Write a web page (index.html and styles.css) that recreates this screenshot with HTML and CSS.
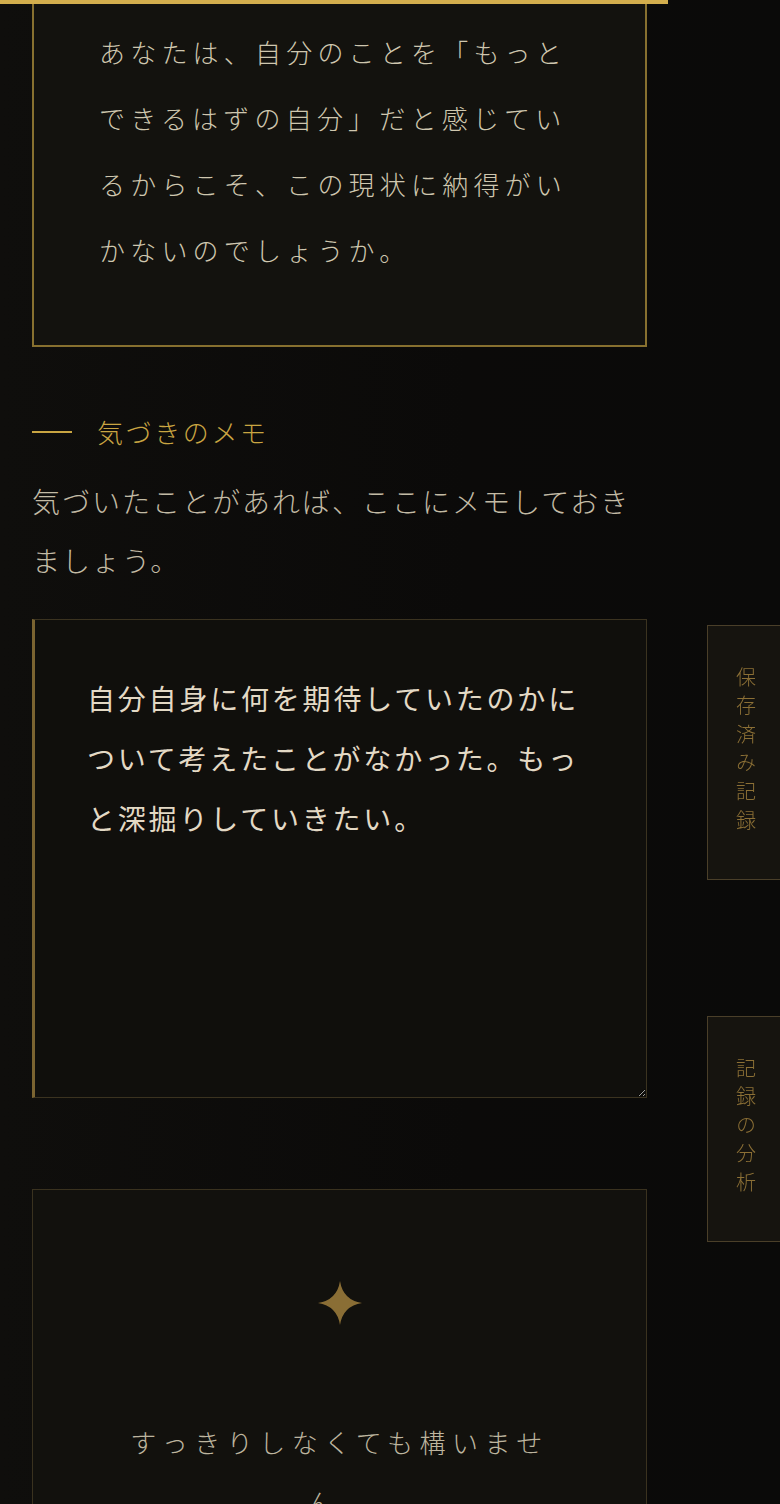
FILE: index.html
```html
<!DOCTYPE html>
<html lang="ja">
<head>
<meta charset="utf-8">
<title>気づきのメモ</title>
<link rel="stylesheet" href="styles.css">
</head>
<body>
<div class="progress"><div class="progress-fill" style="width:85.6%"></div></div>

<main class="page">
  <section class="question-card">
    <p class="question-text">あなたは、自分のことを「もっとできるはずの自分」だと感じているからこそ、この現状に納得がいかないのでしょうか。</p>
  </section>

  <section class="memo">
    <h2 class="memo-title"><span class="memo-line"></span>気づきのメモ</h2>
    <p class="memo-desc">気づいたことがあれば、ここにメモしておきましょう。</p>
    <textarea class="memo-input">自分自身に何を期待していたのかについて考えたことがなかった。もっと深掘りしていきたい。</textarea>
  </section>

  <section class="closing-card">
    <svg class="sparkle" width="44" height="44" viewBox="0 0 44 44" aria-hidden="true">
      <path d="M22 0 Q25 19 44 22 Q25 25 22 44 Q19 25 0 22 Q19 19 22 0 Z" fill="#8a6e35"/>
    </svg>
    <p class="closing-text">すっきりしなくても構いません。</p>
  </section>
</main>

<nav class="side-tabs">
  <a class="side-tab tab-saved">保存済み記録</a>
  <a class="side-tab tab-analysis">記録の分析</a>
</nav>
</body>
</html>
```

FILE: styles.css
```css
html, body {
  margin: 0;
  padding: 0;
}
body {
  background: linear-gradient(90deg, #0f0e0c 0%, #0b0a09 60%, #0a0a09 100%);
  font-family: "Noto Sans CJK JP", "Noto Sans", sans-serif;
  font-weight: 300;
  color: #cdc5ad;
  min-height: 1504px;
  overflow: hidden;
}

.progress {
  position: fixed;
  top: 0;
  left: 0;
  right: 0;
  height: 4px;
  z-index: 10;
}
.progress-fill {
  height: 100%;
  background: #d3ae4d;
}

.page {
  width: 615px;
  margin-left: 32px;
  display: flex;
  flex-direction: column;
}

.question-card {
  margin-top: -46px;
  border: 2px solid #87702f;
  background: #13120e;
  padding: 63px 64px 62px 65px;
}
.question-text {
  margin: 0;
  font-size: 26px;
  line-height: 66px;
  letter-spacing: 5.2px;
  color: #cfc7af;
}

.memo {
  margin-top: 65px;
  display: flex;
  flex-direction: column;
}
.memo-title {
  margin: 0;
  display: flex;
  align-items: center;
  gap: 25px;
  font-size: 26px;
  font-weight: 300;
  line-height: 40px;
  letter-spacing: 2.6px;
  color: #c9a542;
}
.memo-line {
  width: 40px;
  height: 2px;
  background: #c9a542;
}
.memo-desc {
  margin: 20px 0 0;
  font-size: 28px;
  line-height: 59px;
  letter-spacing: 2px;
  color: #c3bba5;
}
.memo-input {
  margin-top: 29px;
  box-sizing: border-box;
  width: 615px;
  height: 479px;
  padding: 48px 52px;
  background: #100f0c;
  border: 1px solid #3b3320;
  border-left: 3px solid #7b6431;
  border-radius: 0;
  font-family: "Noto Sans CJK JP", "Noto Sans", sans-serif;
  font-weight: 400;
  font-size: 28px;
  line-height: 60px;
  letter-spacing: 2.8px;
  color: #e3d9c5;
  outline: none;
  display: block;
}

.closing-card {
  margin-top: 91px;
  border: 1px solid #3a321f;
  background: #12110d;
  padding: 91px 40px 40px;
  display: flex;
  flex-direction: column;
  align-items: center;
}
.sparkle {
  display: block;
}
.closing-text {
  margin: 87px 0 0;
  font-size: 26px;
  line-height: 60px;
  letter-spacing: 6.5px;
  text-align: center;
  color: #bdb59f;
  width: 440px;
}

.side-tabs {
  position: fixed;
  top: 625px;
  right: 0;
  display: flex;
  flex-direction: column;
  gap: 136px;
}
.side-tab {
  box-sizing: border-box;
  width: 73px;
  writing-mode: vertical-rl;
  padding: 40px 0 40px 4px;
  display: flex;
  align-items: center;
  justify-content: center;
  background: #16140f;
  border: 1px solid #4a3f29;
  border-right: none;
  font-size: 20px;
  letter-spacing: 8.6px;
  color: #8b6f35;
}
.tab-saved {
  height: 255px;
}
.tab-analysis {
  height: 226px;
}
```
